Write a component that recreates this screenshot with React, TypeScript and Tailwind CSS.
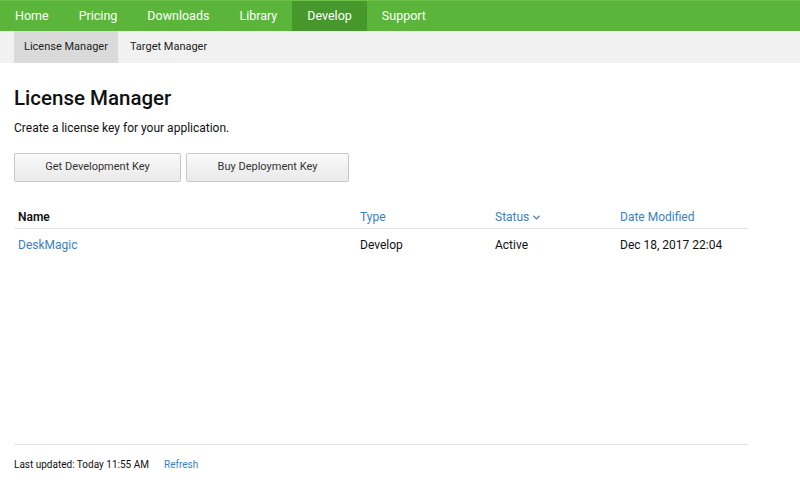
import { ChevronDown } from 'lucide-react';

const navItems = ['Home', 'Pricing', 'Downloads', 'Library', 'Develop', 'Support'];

export default function App() {
  return (
    <div className="w-[800px] h-[493px] bg-white flex flex-col font-['Roboto','Liberation_Sans',sans-serif] text-[#111]">
      {/* Top nav */}
      <nav className="h-[31px] bg-[#5bb53b] border-t border-[#6cc24a] flex">
        {navItems.map((item) => (
          <a
            key={item}
            className={`h-full flex items-center px-[15px] text-[12.5px] text-white ${
              item === 'Develop' ? 'bg-[#46982d]' : ''
            }`}
          >
            {item}
          </a>
        ))}
      </nav>

      {/* Sub nav */}
      <div className="h-[32px] bg-[#f1f1f1] flex pl-[14px] text-[11px]">
        <a className="h-full flex items-center px-[10px] bg-[#dadada] text-[#222]">License Manager</a>
        <a className="h-full flex items-center px-[12px] text-[#222]">Target Manager</a>
      </div>

      <main className="flex-1 flex flex-col px-[14px]">
        <h1 className="mt-[23px] text-[20.5px] font-medium leading-[24px]">License Manager</h1>
        <p className="mt-[10px] text-[12px] leading-[16px]">Create a license key for your application.</p>

        <div className="mt-[17px] flex gap-[5px]">
          <button className="w-[167px] h-[29px] rounded-[2px] border border-[#c9c9c9] bg-gradient-to-b from-[#fafafa] to-[#e9e9e9] text-[11px] text-[#333]">
            Get Development Key
          </button>
          <button className="w-[163px] h-[29px] rounded-[2px] border border-[#c9c9c9] bg-gradient-to-b from-[#fafafa] to-[#e9e9e9] text-[11px] text-[#333]">
            Buy Deployment Key
          </button>
        </div>

        {/* Table */}
        <div className="mt-[26px] w-[734px] text-[12px]">
          <div className="h-[21px] grid grid-cols-[342px_135px_125px_1fr] pl-[4px] items-start border-b border-[#e6e6e6]">
            <span className="font-semibold">Name</span>
            <span className="text-[#3b7fc0]">Type</span>
            <span className="text-[#3b7fc0] flex items-center gap-[2px]">
              Status <ChevronDown size={11} strokeWidth={3} />
            </span>
            <span className="text-[#3b7fc0]">Date Modified</span>
          </div>
          <div className="h-[32px] grid grid-cols-[342px_135px_125px_1fr] pl-[4px] items-center">
            <span className="text-[#3b7fc0]">DeskMagic</span>
            <span>Develop</span>
            <span>Active</span>
            <span>Dec 18, 2017 22:04</span>
          </div>
        </div>

        <div className="flex-1" />

        {/* Footer */}
        <div className="w-[734px] border-t border-[#e3e3e3] pt-[12px] pb-[21px] flex text-[10px]">
          <span className="w-[150px]">Last updated: Today 11:55 AM</span>
          <a className="text-[#3b7fc0]">Refresh</a>
        </div>
      </main>
    </div>
  );
}
